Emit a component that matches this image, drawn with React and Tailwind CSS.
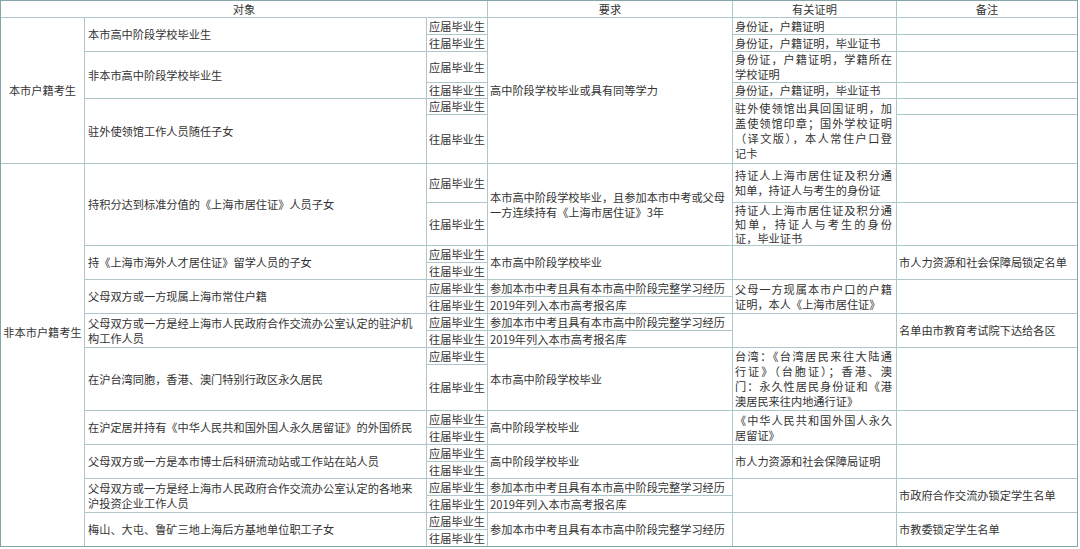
import React from 'react';

// one grid cell, white box sitting on the line-coloured grid background
const Cell = ({ className = '', children }) => (
  <div className={`bg-white flex items-center overflow-hidden ${className}`}>
    {children}
  </div>
);

// explicit lines, every line but the last is spread to full width
const Lines = ({ lines, tight }) => (
  <div className={`w-full ${tight ? 'leading-[14px]' : 'leading-[15px]'}`}>
    {lines.map((l, i) => (
      <div key={i} className={i < lines.length - 1 ? '[text-align-last:justify] whitespace-nowrap' : 'whitespace-nowrap'}>
        {l}
      </div>
    ))}
  </div>
);

const Y = '应届毕业生';
const W = '往届毕业生';
const CANJIA = '参加本市中考且具有本市高中阶段完整学习经历';
const LIRU = '2019年列入本市高考报名库';

// 应届 / 往届 column, one cell per row
const statusCells = [
  ['row-start-2', Y], ['row-start-3', W], ['row-start-4', Y], ['row-start-5', W],
  ['row-start-6', Y], ['row-start-7', W], ['row-start-8', Y], ['row-start-9', W],
  ['row-start-10', Y], ['row-start-11', W], ['row-start-12', Y], ['row-start-13', W],
  ['row-start-14', Y], ['row-start-15', W], ['row-start-16', Y], ['row-start-17', W],
  ['row-start-18', Y], ['row-start-19', W], ['row-start-20', Y], ['row-start-21', W],
  ['row-start-22', Y], ['row-start-23', W], ['row-start-24', Y], ['row-start-25', W],
];

const objects = [
  ['row-start-2', '本市高中阶段学校毕业生'],
  ['row-start-4', '非本市高中阶段学校毕业生'],
  ['row-start-6', '驻外使领馆工作人员随任子女'],
  ['row-start-8', '持积分达到标准分值的《上海市居住证》人员子女'],
  ['row-start-10', '持《上海市海外人才居住证》留学人员的子女'],
  ['row-start-12', '父母双方或一方现属上海市常住户籍'],
  ['row-start-14', ['父母双方或一方是经上海市人民政府合作交流办公室认定的驻沪机', '构工作人员']],
  ['row-start-16', '在沪台湾同胞，香港、澳门特别行政区永久居民'],
  ['row-start-18', '在沪定居并持有《中华人民共和国外国人永久居留证》的外国侨民'],
  ['row-start-20', '父母双方或一方是本市博士后科研流动站或工作站在站人员'],
  ['row-start-22', ['父母双方或一方是经上海市人民政府合作交流办公室认定的各地来', '沪投资企业工作人员']],
  ['row-start-24', '梅山、大屯、鲁矿三地上海后方基地单位职工子女'],
];

const requirements = [
  ['row-start-2 row-span-6', '高中阶段学校毕业或具有同等学力'],
  ['row-start-8 row-span-2', ['本市高中阶段学校毕业，且参加本市中考或父母', '一方连续持有《上海市居住证》3年']],
  ['row-start-10 row-span-2', '本市高中阶段学校毕业'],
  ['row-start-12', CANJIA],
  ['row-start-13', LIRU],
  ['row-start-14', CANJIA],
  ['row-start-15', LIRU],
  ['row-start-16 row-span-2', '本市高中阶段学校毕业'],
  ['row-start-18 row-span-2', '高中阶段学校毕业'],
  ['row-start-20 row-span-2', '高中阶段学校毕业'],
  ['row-start-22', CANJIA],
  ['row-start-23', LIRU],
  ['row-start-24 row-span-2', CANJIA],
];

const proofs = [
  ['row-start-2', ['身份证，户籍证明']],
  ['row-start-3', ['身份证，户籍证明，毕业证书']],
  ['row-start-4', ['身份证，户籍证明，学籍所在', '学校证明']],
  ['row-start-5', ['身份证，户籍证明，毕业证书']],
  ['row-start-6 row-span-2', ['驻外使领馆出具回国证明，加', '盖使领馆印章；国外学校证明', '（译文版），本人常住户口登', '记卡']],
  ['row-start-8', ['持证人上海市居住证及积分通', '知单，持证人与考生的身份证']],
  ['row-start-9', ['持证人上海市居住证及积分通', '知单，持证人与考生的身份', '证，毕业证书'], true],
  ['row-start-10 row-span-2', []],
  ['row-start-12 row-span-2', ['父母一方现属本市户口的户籍', '证明，本人《上海市居住证》']],
  ['row-start-14 row-span-2', []],
  ['row-start-16 row-span-2', ['台湾：《台湾居民来往大陆通', '行证》（台胞证）；香港、澳', '门：永久性居民身份证和《港', '澳居民来往内地通行证》']],
  ['row-start-18 row-span-2', ['《中华人民共和国外国人永久', '居留证》']],
  ['row-start-20 row-span-2', ['市人力资源和社会保障局证明']],
  ['row-start-22 row-span-2', []],
  ['row-start-24 row-span-2', []],
];

const notes = [
  ['row-start-2', ''], ['row-start-3', ''], ['row-start-4', ''], ['row-start-5', ''],
  ['row-start-6', ''], ['row-start-7', ''], ['row-start-8', ''], ['row-start-9', ''],
  ['row-start-10 row-span-2', '市人力资源和社会保障局锁定名单'],
  ['row-start-12 row-span-2', ''],
  ['row-start-14 row-span-2', '名单由市教育考试院下达给各区'],
  ['row-start-16 row-span-2', ''],
  ['row-start-18 row-span-2', ''],
  ['row-start-20 row-span-2', ''],
  ['row-start-22 row-span-2', '市政府合作交流办锁定学生名单'],
  ['row-start-24 row-span-2', '市教委锁定学生名单'],
];

const lineText = (t) =>
  Array.isArray(t) ? (
    <div className="leading-[15px] whitespace-nowrap">
      {t.map((l, i) => <div key={i}>{l}</div>)}
    </div>
  ) : (
    <span className="whitespace-nowrap">{t}</span>
  );

export default function App() {
  return (
    <div className="w-[1080px] h-[549px] bg-white overflow-hidden font-['Noto_Sans_CJK_SC','Noto_Sans',sans-serif] text-[11.2px] text-[#333333]">
      <div className="grid w-[1078px] border border-[#86a5aa] bg-[#afc7ca] gap-px grid-cols-[83px_341px_60px_244px_163px_180px] grid-rows-[16px_16px_16px_30px_15px_15px_48px_38px_42px_16px_16px_16px_16px_16px_16px_16px_45px_16px_16px_16px_16px_16px_16px_16px_16px]">
        {/* header */}
        <Cell className="col-start-1 col-span-3 row-start-1 justify-center">对象</Cell>
        <Cell className="col-start-4 row-start-1 justify-center">要求</Cell>
        <Cell className="col-start-5 row-start-1 justify-center">有关证明</Cell>
        <Cell className="col-start-6 row-start-1 justify-center">备注</Cell>

        {/* groups */}
        <Cell className="col-start-1 row-start-2 row-span-6 justify-center">本市户籍考生</Cell>
        <Cell className="col-start-1 row-start-8 row-span-18 justify-center pb-[46px]">非本市户籍考生</Cell>

        {objects.map(([r, t]) => (
          <Cell key={'o' + r} className={`col-start-2 row-span-2 pl-[3px] ${r}`}>{lineText(t)}</Cell>
        ))}

        {statusCells.map(([r, t]) => (
          <Cell key={'s' + r} className={`col-start-3 pl-[2px] whitespace-nowrap ${r}`}>{t}</Cell>
        ))}

        {requirements.map(([r, t]) => (
          <Cell key={'r' + r} className={`col-start-4 pl-[2px] ${r}`}>{lineText(t)}</Cell>
        ))}

        {proofs.map(([r, lines, tight]) => (
          <Cell key={'p' + r} className={`col-start-5 pl-[2px] pr-[4px] ${r}`}>
            {lines.length > 0 && <Lines lines={lines} tight={tight} />}
          </Cell>
        ))}

        {notes.map(([r, t]) => (
          <Cell key={'n' + r} className={`col-start-6 pl-[2px] ${r}`}>{t && lineText(t)}</Cell>
        ))}
      </div>
    </div>
  );
}
